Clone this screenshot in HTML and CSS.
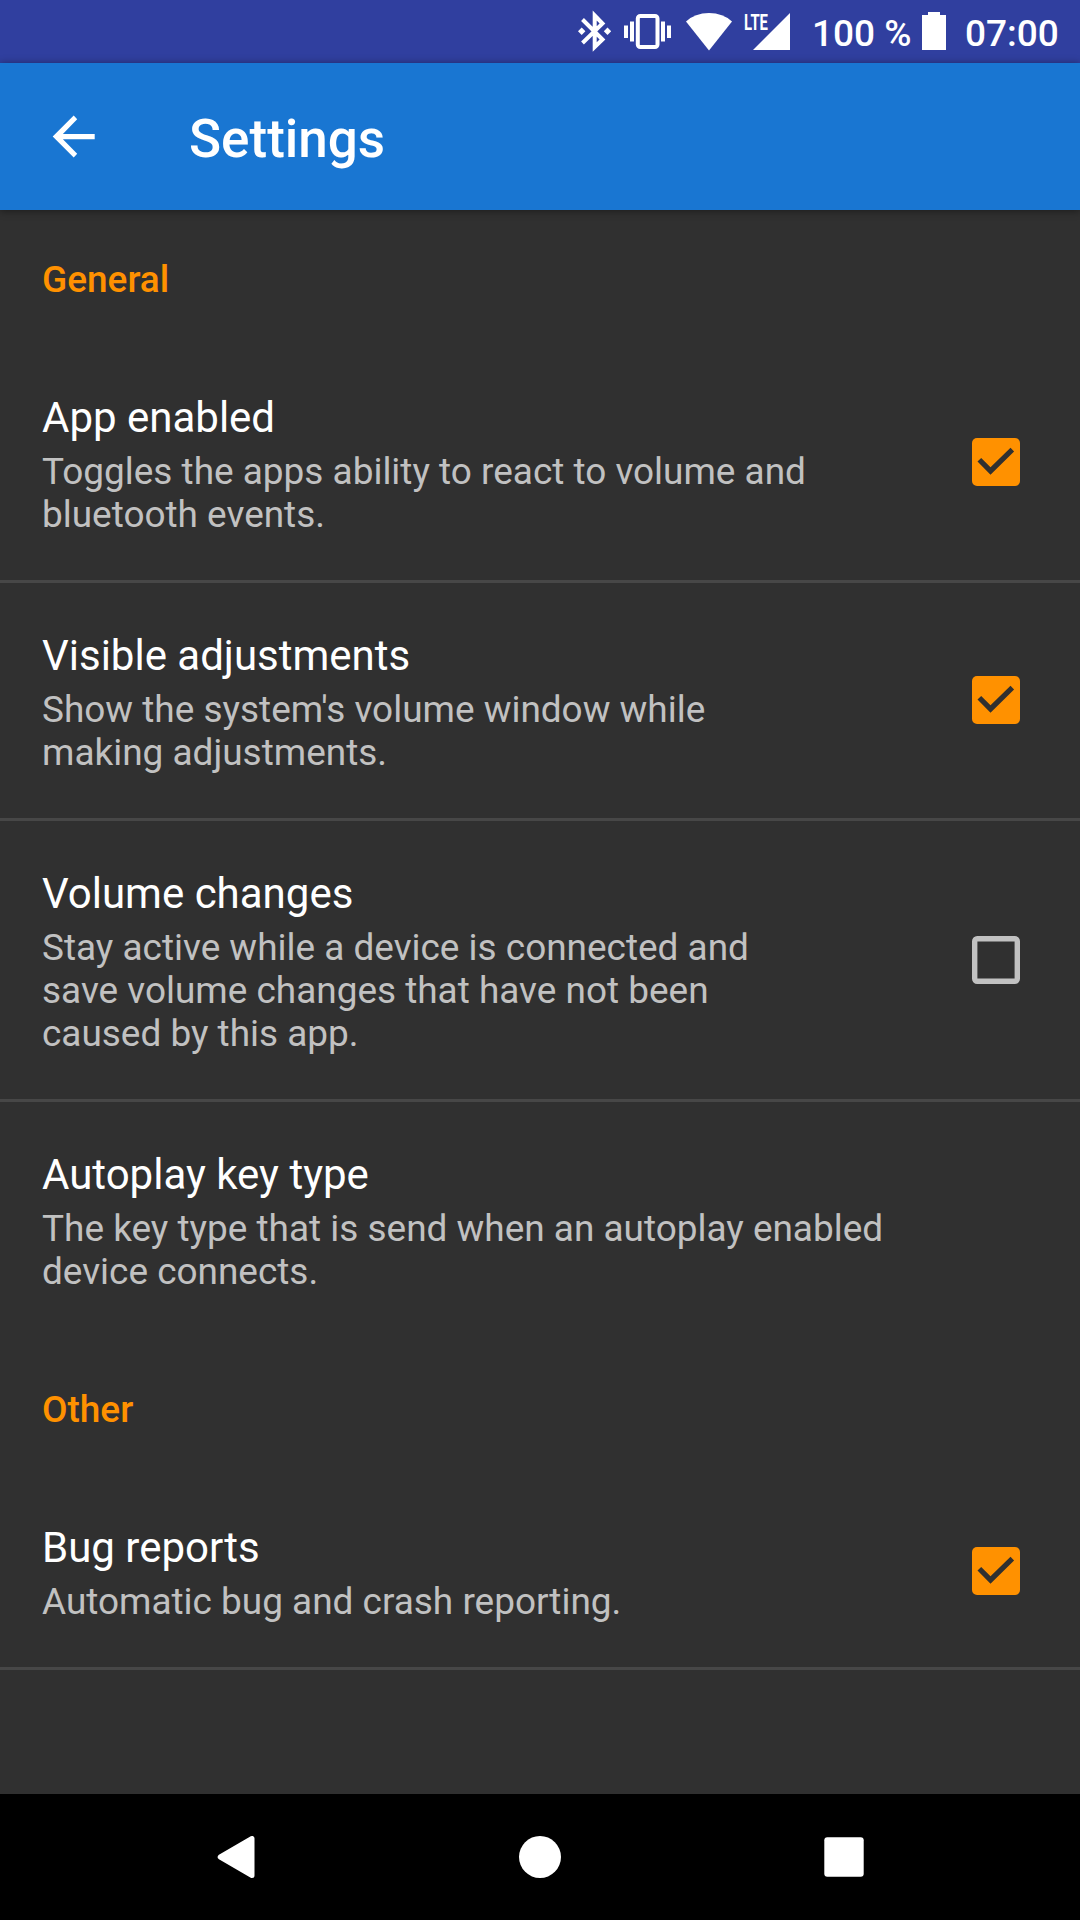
FILE: index.html
```html
<!DOCTYPE html>
<html lang="en">
<head>
<meta charset="utf-8">
<title>Settings</title>
<link rel="stylesheet" href="styles.css">
</head>
<body>
<div class="screen">
  <div class="status-bar">
    <svg class="status-icons" width="222" height="63" viewBox="570 0 222 63" fill="#fff">
      <path fill="none" stroke="#fff" stroke-width="4" d="M582.5 19.5 L602.5 39.5 L594.7 47 V15.5 L602.5 23.5 L582.5 43"/>
      <path d="M578 31.3l3.7-3.7 3.7 3.7-3.7 3.7zM603.8 31.3l3.7-3.7 3.7 3.7-3.7 3.7z"/>
      <rect x="637.8" y="16" width="19.7" height="31" rx="2.5" fill="none" stroke="#fff" stroke-width="4"/>
      <path d="M624 25.5h4v12.500h-4zM630 21.500h4v20h-4zM661 21.500h4v20h-4zM667 25.500h4v12.500h-4z"/>
      <path d="M709 50.500L686 21.500Q695 13 709 13T732 21.500z"/>
      <path d="M790 13V50H753z"/>
      <text class="network-label" x="744" y="29.800" textLength="24" lengthAdjust="spacingAndGlyphs">LTE</text>
    </svg>
    <span class="battery-level">100 %</span>
    <svg class="battery" width="24" height="38" viewBox="0 0 24 38" fill="#fff"><path d="M6 0h12v3h6v35H0V3h6z"/></svg>
    <span class="clock">07:00</span>
  </div>
  <header class="app-bar">
    <svg class="back" width="42" height="42" viewBox="0.3 -0.6 42 42" fill="#fff"><path d="M42 18.400v5.200H10.200L24.500 38.200 21 42 0 21 21 0l3.500 3.600L10.200 18.400z"/></svg>
    <h1 class="title">Settings</h1>
  </header>
  <main class="preferences">
    <h2 class="category">General</h2>
    <div class="item divided">
      <div class="label"><div class="name">App enabled</div><div class="summary">Toggles the apps ability to react to volume and bluetooth events.</div></div>
      <svg class="checkbox" width="48" height="48" viewBox="0 0 48 48"><rect class="box-on" width="48" height="48" rx="5"/><path class="tick" d="M5.500 23.500l3.700-3.600 9.300 9.300L38.500 9.700l3.600 3.700L18.500 36.700z"/></svg>
    </div>
    <div class="item divided">
      <div class="label"><div class="name">Visible adjustments</div><div class="summary">Show the system's volume window while making adjustments.</div></div>
      <svg class="checkbox" width="48" height="48" viewBox="0 0 48 48"><rect class="box-on" width="48" height="48" rx="5"/><path class="tick" d="M5.500 23.500l3.700-3.600 9.300 9.300L38.500 9.700l3.600 3.700L18.500 36.700z"/></svg>
    </div>
    <div class="item divided">
      <div class="label"><div class="name">Volume changes</div><div class="summary">Stay active while a device is connected and save volume changes that have not been caused by this app.</div></div>
      <svg class="checkbox" width="48" height="48" viewBox="0 0 48 48"><rect class="box-off" x="2.700" y="2.700" width="42.600" height="42.600" rx="2.500"/></svg>
    </div>
    <div class="item plain">
      <div class="label"><div class="name">Autoplay key type</div><div class="summary">The key type that is send when an autoplay enabled device connects.</div></div>
    </div>
    <h2 class="category">Other</h2>
    <div class="item divided">
      <div class="label"><div class="name">Bug reports</div><div class="summary">Automatic bug and crash reporting.</div></div>
      <svg class="checkbox" width="48" height="48" viewBox="0 0 48 48"><rect class="box-on" width="48" height="48" rx="5"/><path class="tick" d="M5.500 23.500l3.700-3.600 9.300 9.300L38.500 9.700l3.600 3.700L18.500 36.700z"/></svg>
    </div>
  </main>
  <nav class="nav-bar">
    <svg width="42" height="42" viewBox="0 0 42 42"><path d="M5.200 21L37 2.500V39.500z" fill="#fff" stroke="#fff" stroke-width="5" stroke-linejoin="round"/></svg>
    <svg width="42" height="42" viewBox="0 0 42 42"><circle cx="21" cy="21" r="21" fill="#fff"/></svg>
    <svg width="42" height="42" viewBox="0 0 42 42"><rect x="1.300" y="1.300" width="39.400" height="39.400" rx="3" fill="#fff"/></svg>
  </nav>
</div>
</body>
</html>
```
FILE: styles.css
```css
* { box-sizing: border-box; }
body { margin: 0; background: #303030; font-family: Roboto, sans-serif; color: #fff; }
svg { display: block; flex: none; }
.screen { width: 1080px; height: 1920px; display: flex; flex-direction: column; background: #303030; overflow: hidden; }

.status-bar { height: 63px; flex: none; display: flex; justify-content: flex-end; background: #303f9f; padding-right: 20px; font-size: 37px; font-weight: 500; line-height: 67px; white-space: nowrap; }
.network-label { font: 700 22.500px Roboto, sans-serif; }
.battery-level { width: 100px; margin-left: 20px; }
.battery { margin: 12px 19px 0 10px; }
.clock { width: 95px; }

.app-bar { height: 147px; flex: none; display: flex; align-items: center; background: #1976d2; padding-left: 53px; box-shadow: 0 1px 8px rgba(0, 0, 0, 0.45); }
.back { margin-top: -1px; overflow: visible; }
.title { margin: 4px 0 0 94px; font-size: 53px; font-weight: 500; line-height: 62px; }

.preferences { flex: 1; }
.category { height: 135px; margin: 0; padding: 48px 42px 0; color: #ff9100; font-size: 37px; font-weight: 500; line-height: 43px; }
.item { display: flex; align-items: center; justify-content: space-between; padding-right: 60px; }
.divided { border-bottom: 3px solid #474747; }
.label { width: 820px; padding: 48px 0 44px 42px; }
.plain { padding-bottom: 3px; }
.plain .label { width: 980px; }
.name { font-size: 42px; line-height: 49px; }
.summary { margin-top: 8px; color: #c1c1c1; font-size: 36.95px; line-height: 43px; }
.checkbox { margin-bottom: 0.5px; }
.box-on { fill: #ff9100; }
.tick { fill: #303030; }
.box-off { fill: none; stroke: #c1c1c1; stroke-width: 5.4; }

.nav-bar { height: 126px; flex: none; display: flex; align-items: center; justify-content: space-between; padding: 0 215px; background: #000; }
```
